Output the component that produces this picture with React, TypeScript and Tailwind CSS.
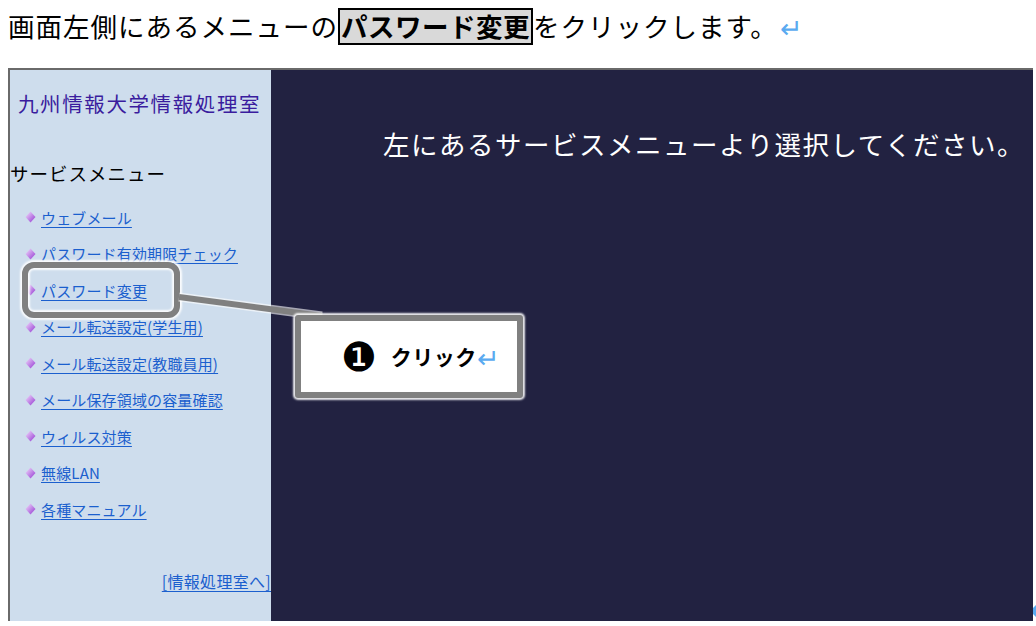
import React from 'react';

const JP = "font-['Noto_Sans_CJK_JP','Noto_Sans',sans-serif]";

const menu = [
  'ウェブメール',
  'パスワード有効期限チェック',
  'パスワード変更',
  'メール転送設定(学生用)',
  'メール転送設定(教職員用)',
  'メール保存領域の容量確認',
  'ウィルス対策',
  '無線LAN',
  '各種マニュアル',
];

const Diamond = () => (
  <svg width="11" height="12" viewBox="0 0 11 12" className="shrink-0">
    <defs>
      <linearGradient id="dg" x1="0" y1="0" x2="1" y2="1">
        <stop offset="0" stopColor="#f5e2ff" />
        <stop offset="1" stopColor="#9233d0" />
      </linearGradient>
    </defs>
    <polygon points="5.5,0.5 10.5,6 5.5,11.5 0.5,6" fill="url(#dg)" />
  </svg>
);

export default function App() {
  return (
    <div className={`relative w-[1036px] h-[626px] overflow-hidden bg-white ${JP}`}>
      {/* Instruction line */}
      <div className="h-[68px] pl-2 pt-2">
        <p className="flex items-center h-[37px] text-[26.5px] tracking-[1px] text-black leading-none">
          <span>画面左側にあるメニューの</span>
          <span className="flex items-center h-[37px] px-[1px] border-2 border-black bg-[#d9d9d9] font-bold tracking-[0.5px]">
            パスワード変更
          </span>
          <span>をクリックします。</span>
          <span className="text-[#5aaaf0] text-[27px] ml-[2px] leading-none">↵</span>
        </p>
      </div>

      {/* Screenshot frame */}
      <div className="ml-2 flex w-[1025px] h-[553px] border-t-2 border-l-2 border-[#6a6a6a]">
        <aside className="w-[261px] shrink-0 bg-[#cedded] flex flex-col">
          <h1 className="mt-[21px] pl-[8px] text-[20.5px] tracking-[1.6px] text-[#3a1c9e] leading-[24px]">
            九州情報大学情報処理室
          </h1>
          <h2 className="mt-[46px] text-[18.5px] tracking-[1px] text-black leading-[24px]">
            サービスメニュー
          </h2>
          <ul className="mt-[14px] flex flex-col">
            {menu.map((m) => (
              <li key={m} className="h-[36.5px] flex items-center gap-[5px] pl-[15px]">
                <Diamond />
                <a className="text-[15px] tracking-[0.15px] text-[#1b5fce] underline underline-offset-[3px] leading-none">
                  {m}
                </a>
              </li>
            ))}
          </ul>
          <div className="mt-auto mb-[28px] text-right">
            <a className="text-[16px] tracking-[0.3px] text-[#1b5fce] underline underline-offset-[3px] leading-none">
              [情報処理室へ]
            </a>
          </div>
        </aside>
        <main className="flex-1 bg-[#222241] pt-[56px] pl-[112px]">
          <p className="text-white text-[26.5px] tracking-[1.5px] leading-[36px]">
            左にあるサービスメニューより選択してください。
          </p>
        </main>
      </div>

      {/* Annotation overlay */}
      <div className="absolute left-[22px] top-[262px] w-[158px] h-[56px] rounded-[12px] border-[6px] border-[#808080] shadow-[0_0_2px_2px_rgba(255,255,255,0.9),inset_0_0_2px_2px_rgba(255,255,255,0.9)]" />
      <svg className="absolute left-0 top-0" width="1036" height="626">
        <line x1="179" y1="297" x2="322" y2="316" stroke="#ffffff" strokeWidth="9" opacity="0.6" />
        <line x1="179" y1="297" x2="322" y2="316" stroke="#808080" strokeWidth="6" />
        <path d="M1033 608 L1036 605 L1036 617 L1033 614 Z" fill="#5aaaf0" />
      </svg>
      <div className="absolute left-[295px] top-[315px] w-[228px] h-[83px] rounded-[3px] border-[6px] border-[#808080] bg-white shadow-[0_0_2px_2px_rgba(255,255,255,0.9)] flex items-center pl-[40px]">
        <span className="text-[40px] leading-none font-['DejaVu_Sans',sans-serif] text-black">❶</span>
        <span className="ml-[14px] text-[21px] font-bold text-black tracking-[0.5px]">クリック</span>
        <span className="text-[27px] text-[#5aaaf0] leading-none">↵</span>
      </div>
    </div>
  );
}
